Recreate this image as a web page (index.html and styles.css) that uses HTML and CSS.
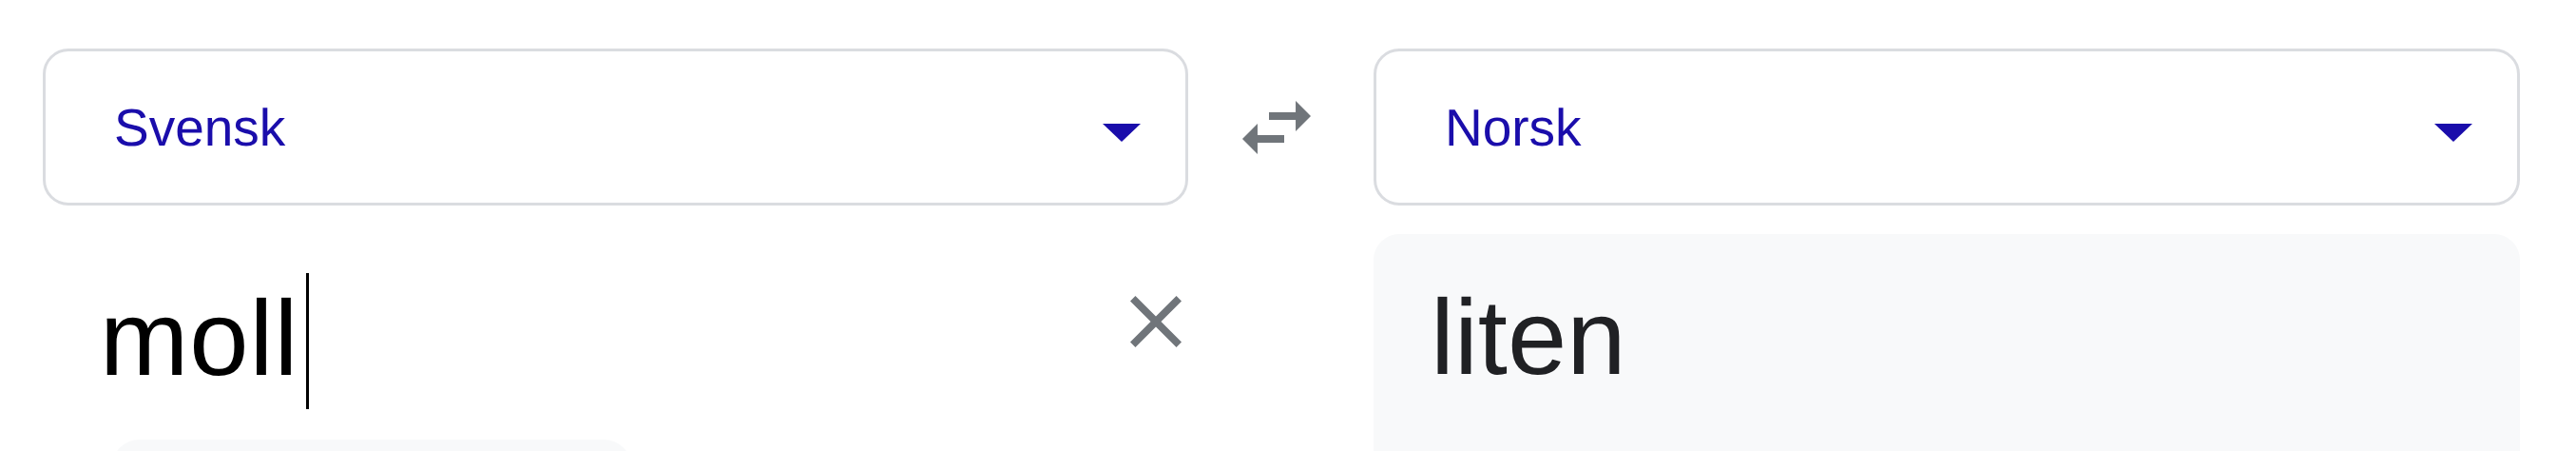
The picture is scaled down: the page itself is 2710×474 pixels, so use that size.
FILE: index.html
```html
<!DOCTYPE html>
<html lang="sv">
<head>
  <meta charset="UTF-8" />
  <meta name="viewport" content="width=device-width, initial-scale=1" />
  <title>Översätt</title>
  <link rel="stylesheet" href="styles.css">
</head>
<body>
  <main class="translator">

    <div class="lang-select" role="button" aria-label="Källspråk">
      <span class="lang-name">Svensk</span>
      <span class="caret-down" aria-hidden="true"></span>
    </div>

    <button class="swap" type="button" aria-label="Byt språk">
      <svg viewBox="0 0 24 24" aria-hidden="true">
        <path d="M6.99 11L3 15l3.99 4v-3H14v-2H6.99v-3zM21 9l-3.99-4v3H10v2h7.01v3L21 9z"/>
      </svg>
    </button>

    <div class="lang-select" role="button" aria-label="Målspråk">
      <span class="lang-name">Norsk</span>
      <span class="caret-down" aria-hidden="true"></span>
    </div>

    <section class="source">
      <div class="source-input">
        <div class="source-text">moll<span class="text-caret"></span></div>
        <button class="clear" type="button" aria-label="Rensa text">
          <svg viewBox="5 5 14 14" aria-hidden="true">
            <path d="M19 6.41L17.59 5 12 10.59 6.41 5 5 6.41 10.59 12 5 17.59 6.41 19 12 13.41 17.59 19 19 17.59 13.41 12z"/>
          </svg>
        </button>
      </div>
      <div class="chip"></div>
    </section>

    <div class="spacer"></div>

    <section class="output">
      <div class="output-text">liten</div>
    </section>

  </main>
</body>
</html>
```

FILE: styles.css
```css
:root {
  --color-link: #1a0dab;
  --color-icon: #70757a;
  --color-border: #dadce0;
  --color-text: #202124;
  --color-panel: #f8f9fa;
  --font-body: 'Liberation Sans', Arial, sans-serif;
  --radius: 27px;
}

*, *::before, *::after {
  box-sizing: border-box;
}

body {
  margin: 0;
  background: #fff;
  font-family: var(--font-body);
  color: var(--color-text);
  overflow: hidden;
  text-rendering: geometricPrecision;
  -webkit-font-smoothing: antialiased;
}

.translator {
  display: grid;
  grid-template-columns: 1205px 195px 1206px;
  row-gap: 30px;
  padding: 51px 0 0 45px;
}

/* language pickers */
.lang-select {
  height: 165px;
  border: 3px solid var(--color-border);
  border-radius: var(--radius);
  display: flex;
  align-items: center;
  justify-content: space-between;
  padding: 0 47px 0 72px;
  cursor: pointer;
}
.lang-name {
  font-size: 55px;
  line-height: 1.2;
  color: var(--color-link);
}
.caret-down {
  width: 0;
  height: 0;
  margin-top: 12px;
  border-left: 20px solid transparent;
  border-right: 20px solid transparent;
  border-top: 19px solid var(--color-link);
}

.swap {
  align-self: center;
  justify-self: start;
  margin-left: 45px;
  width: 96px;
  height: 96px;
  padding: 0;
  border: 0;
  background: none;
  cursor: pointer;
}
.swap svg {
  display: block;
  width: 100%;
  height: 100%;
  fill: var(--color-icon);
}

/* source side */
.source-input {
  height: 216px;
  display: flex;
  justify-content: space-between;
  align-items: flex-start;
  padding: 0 7px 0 60px;
}
.source-text {
  margin-top: 41px;
  font-size: 112px;
  line-height: 134px;
  letter-spacing: 1px;
  color: #000;
}
.text-caret {
  display: inline-block;
  width: 3px;
  height: 143px;
  margin-left: 8px;
  vertical-align: -36px;
  background: #000;
}
.clear {
  margin-top: 65px;
  width: 54px;
  height: 54px;
  padding: 0;
  border: 0;
  background: none;
  cursor: pointer;
}
.clear svg {
  display: block;
  width: 100%;
  height: 100%;
  fill: var(--color-icon);
}
.chip {
  margin-left: 72px;
  width: 548px;
  height: 70px;
  border-radius: 30px;
  background: var(--color-panel);
}

/* result side */
.output {
  min-height: 300px;
  background: var(--color-panel);
  border-radius: var(--radius);
  padding: 42px 0 0 60px;
}
.output-text {
  font-size: 112px;
  line-height: 134px;
  color: var(--color-text);
}
```
